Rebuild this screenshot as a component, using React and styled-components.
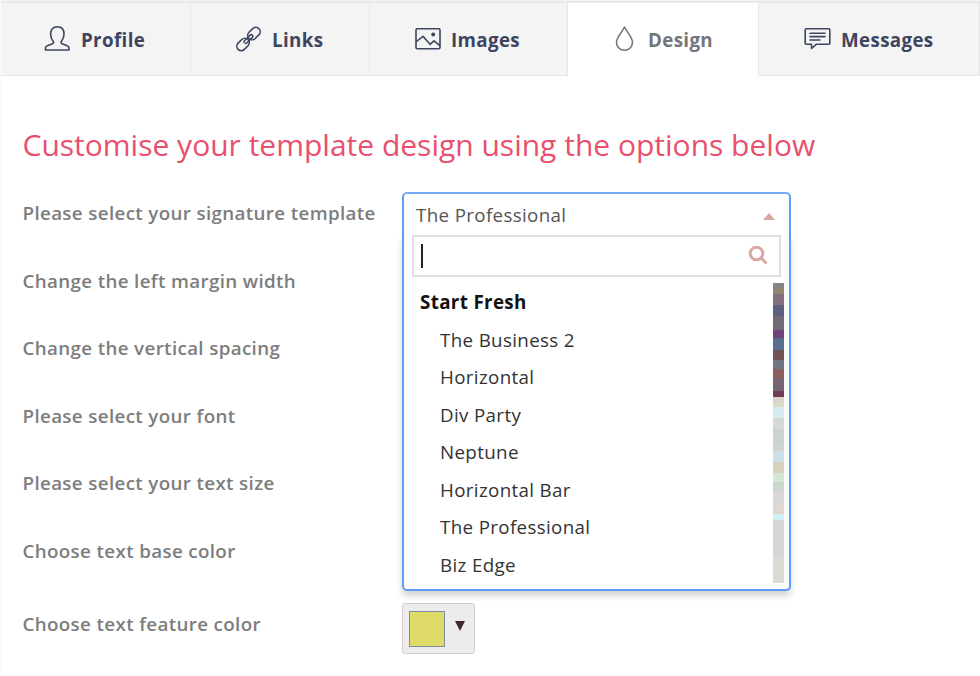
import React from "react"
import styled, { createGlobalStyle } from "styled-components"

const GlobalStyle = createGlobalStyle`
  * {
    box-sizing: border-box;
  }

  body {
    margin: 0;
    background: #fff;
    font-family: "Open Sans", "Noto Sans", sans-serif;
  }
`

const Page = styled.div`
  width: 980px;
  height: 676px;
  overflow: hidden;
  border-left: 1px solid #fafafa;
`

const TabBar = styled.nav`
  display: grid;
  grid-template-columns: 191px 179px 198px 190px 222px;
  height: 76px;
  margin-left: -1px;
  padding-top: 1px;
  background: #f4f4f4;
`

const Tab = styled.a`
  display: flex;
  align-items: center;
  padding: 0 0 ${(props) => (props.$active ? 1 : 0)}px ${(props) => props.$inset}px;
  border-top: 2px solid #e9e9e9;
  border-right: ${(props) => (props.$active ? "none" : "1px solid #e7e7e7")};
  border-bottom: ${(props) => (props.$active ? "none" : "1px solid #e7e7e7")};
  border-left: ${(props) => (props.$bordered ? "1px solid #e7e7e7" : "none")};
  background: ${(props) => (props.$active ? "#fff" : "#f4f4f4")};
  color: ${(props) => (props.$active ? "#75757d" : "#3d4560")};
  font-size: 18.75px;
  font-weight: 700;
  letter-spacing: 0.35px;
`

const TabIcon = styled.svg`
  flex: none;
  width: 28px;
  height: 28px;
  margin: 0 ${(props) => props.$gap}px 3px 0;
  fill: none;
  stroke: currentColor;
  stroke-width: 1.6;
  stroke-linejoin: round;
  stroke-linecap: round;
`

const Content = styled.main`
  padding: 48px 0 0 21.5px;
`

const Heading = styled.h1`
  margin: 0;
  height: 41px;
  color: #e8506e;
  font-size: 30px;
  font-weight: 400;
  line-height: 41px;
  white-space: nowrap;
`

const Form = styled.div`
  display: grid;
  grid-template-columns: 379.5px 389px;
  grid-template-rows: repeat(6, 67.5px) 60px;
  padding-top: 27px;
`

const Label = styled.label`
  padding-top: ${(props) => props.$offset || 8}px;
  color: #7d7d7d;
  font-size: 18.75px;
  font-weight: 600;
  letter-spacing: 0.36px;
  line-height: 26px;
  white-space: nowrap;
`

const Field = styled.div`
  position: relative;
`

const Select = styled.div`
  display: flex;
  align-items: center;
  justify-content: space-between;
  height: 44px;
  padding: 0 14px 1px 12px;
  border: 2px solid #5c9dfb;
  border-top-color: #74abfb;
  border-bottom: none;
  border-radius: 5px 5px 0 0;
  color: #555;
  font-size: 18.75px;
  letter-spacing: 0.35px;
`

const ArrowUp = styled.span`
  margin-top: 3px;
  border: 6px solid transparent;
  border-top: none;
  border-bottom: 7px solid #d8a8a2;
`

const Dropdown = styled.div`
  position: absolute;
  z-index: 1;
  top: 43px;
  left: 0;
  width: 389px;
  height: 356px;
  padding: 0 5px 0 8px;
  border: 2px solid #5c9dfb;
  border-top: none;
  border-radius: 0 0 5px 5px;
  background: #fff;
  box-shadow: 0 5px 6px rgba(0, 0, 0, 0.17);
  clip-path: inset(0 -12px -16px -12px);
`

const SearchBox = styled.div`
  display: flex;
  align-items: center;
  justify-content: space-between;
  width: 369px;
  height: 42px;
  padding: 0 11px 2px 7px;
  border: 2px solid #dfdfdf;
`

const Caret = styled.span`
  width: 2px;
  height: 24px;
  margin-top: 2px;
  background: #222;
`

const SearchIcon = styled.svg`
  width: 20px;
  height: 20px;
  fill: none;
  stroke: #d8a8a2;
  stroke-width: 3;
`

const Results = styled.div`
  display: flex;
  justify-content: space-between;
  padding-top: 6px;
`

const OptionList = styled.ul`
  margin: 0;
  padding: 0 0 0 8px;
  list-style: none;
`

const Option = styled.li`
  height: 37.5px;
  padding-left: ${(props) => (props.$group ? 0 : 20)}px;
  color: ${(props) => (props.$group ? "#111" : "#333")};
  font-size: 18.75px;
  font-weight: ${(props) => (props.$group ? 700 : 400)};
  letter-spacing: 0.35px;
  line-height: 37px;
  white-space: nowrap;
`

const Scrollbar = styled.div`
  width: 11px;
`

const Segment = styled.div`
  height: ${(props) => props.$size}px;
  background: ${(props) => props.$color};
`

const ColorPicker = styled.button`
  display: flex;
  align-items: center;
  justify-content: space-between;
  width: 73px;
  height: 51px;
  margin-top: 6px;
  padding: 0 9px 0 6px;
  border: 1.5px solid #d8cbce;
  border-radius: 3px;
  background: #ececec;
`

const Swatch = styled.span`
  width: 36px;
  height: 36px;
  border: 1.5px solid #8589a0;
  background: ${(props) => props.$color};
`

const ArrowDown = styled.span`
  margin-bottom: 5px;
  border: 5px solid transparent;
  border-top: 10px solid #3d2a30;
  border-bottom: none;
`

const tabs = [
  {
    label: "Profile",
    inset: 43,
    gap: 10,
    icon: (
      <path d="M2.500 26v-2.200c0-1.200 1-2 2.400-2.400l4.600-1.600c1.200-.5 1.400-1.600.6-2.600C8.600 15.400 7.600 12.800 7.600 10.100 7.600 5.500 10 2.800 14.300 2.800s6.700 2.700 6.700 7.300c0 2.700-1 5.300-2.500 7.100-.8 1-.6 2.100.6 2.600l4.600 1.600c1.400.4 2.300 1.200 2.300 2.400V26z" />
    ),
  },
  {
    label: "Links",
    inset: 43,
    gap: 10,
    icon: (
      <g transform="rotate(-45 14.500 15)">
        <rect x="-.2" y="10.600" width="14" height="8.800" rx="4.400" />
        <rect x="15.200" y="10.600" width="14" height="8.800" rx="4.400" />
        <path d="M9 14.100c.5-.5 1-.7 1.800-.7h7.600c1 0 1.600.6 1.600 1.600s-.6 1.600-1.600 1.600h-7.600c-.8 0-1.300-.2-1.800-.7" />
      </g>
    ),
  },
  {
    label: "Images",
    inset: 44,
    gap: 9,
    icon: (
      <>
        <rect x="2" y="4.800" width="24" height="20" rx="1.200" />
        <path d="M2.500 17.500 9 12.300l7 8 4-3.500 5.500 4.500" />
        <circle cx="19.200" cy="10.600" r="1.200" fill="currentColor" />
      </>
    ),
  },
  {
    label: "Design",
    inset: 43,
    gap: 9,
    active: true,
    icon: <path d="M13.500 3C10.700 8.500 5.500 13.500 5.500 18.300a8 8 0 0 0 16 0c0-4.800-5.200-9.800-8-15.300z" />,
  },
  {
    label: "Messages",
    inset: 44,
    gap: 10,
    bordered: true,
    icon: (
      <path d="M3.200 4.800h22.600c.6 0 1 .4 1 1v13.500c0 .6-.4 1-1 1H13.200l-4.700 4.200v-4.200H3.200c-.6 0-1-.4-1-1V5.800c0-.6.4-1 1-1zM7 9.300h15M7 12.600h15M7 16h10" />
    ),
  },
]

const templates = [
  "The Business 2",
  "Horizontal",
  "Div Party",
  "Neptune",
  "Horizontal Bar",
  "The Professional",
  "Biz Edge",
]

const segments = [
  [5, "#82867e"],
  [6, "#928570"],
  [11, "#84707c"],
  [11, "#5e617d"],
  [14, "#706a77"],
  [8, "#70447a"],
  [12, "#576e91"],
  [10, "#745355"],
  [9, "#6f7682"],
  [9, "#8e5e5e"],
  [13, "#766574"],
  [6, "#703d52"],
  [5, "#d5d6c8"],
  [5, "#d7dcc8"],
  [11, "#d6ecf0"],
  [11, "#d5d8d7"],
  [14, "#c9d3d0"],
  [8, "#d0d5ce"],
  [11, "#cbe1e7"],
  [11, "#d6d0bc"],
  [9, "#d3e7d4"],
  [9, "#cbd6cf"],
  [14, "#d9d8d8"],
  [9, "#e0d8d0"],
  [6, "#d1f0f6"],
  [37, "#d4d5d4"],
  [26, "#d9dbd4"],
]

const labels = [
  "Please select your signature template",
  "Change the left margin width",
  "Change the vertical spacing",
  "Please select your font",
  "Please select your text size",
  "Choose text base color",
]

function TemplateSelect() {
  return (
    <Field>
      <Select>
        The Professional
        <ArrowUp />
      </Select>
      <Dropdown>
        <SearchBox>
          <Caret />
          <SearchIcon viewBox="0 0 20 20">
            <circle cx="8.500" cy="8.500" r="6.300" />
            <path d="M13 13l5.500 5.500" />
          </SearchIcon>
        </SearchBox>
        <Results>
          <OptionList>
            <Option $group>Start Fresh</Option>
            {templates.map((name) => (
              <Option key={name}>{name}</Option>
            ))}
          </OptionList>
          <Scrollbar>
            {segments.map(([size, color]) => (
              <Segment key={color} $size={size} $color={color} />
            ))}
          </Scrollbar>
        </Results>
      </Dropdown>
    </Field>
  )
}

export default function App() {
  return (
    <Page>
      <GlobalStyle />
      <TabBar>
        {tabs.map((tab) => (
          <Tab key={tab.label} $inset={tab.inset} $active={tab.active} $bordered={tab.bordered}>
            <TabIcon viewBox="0 0 28 28" $gap={tab.gap}>
              {tab.icon}
            </TabIcon>
            {tab.label}
          </Tab>
        ))}
      </TabBar>
      <Content>
        <Heading>Customise your template design using the options below</Heading>
        <Form>
          {labels.map((label, i) => (
            <React.Fragment key={label}>
              <Label>{label}</Label>
              {i === 0 ? <TemplateSelect /> : <Field />}
            </React.Fragment>
          ))}
          <Label $offset={14}>Choose text feature color</Label>
          <Field>
            <ColorPicker>
              <Swatch $color="#dfdb68" />
              <ArrowDown />
            </ColorPicker>
          </Field>
        </Form>
      </Content>
    </Page>
  )
}
